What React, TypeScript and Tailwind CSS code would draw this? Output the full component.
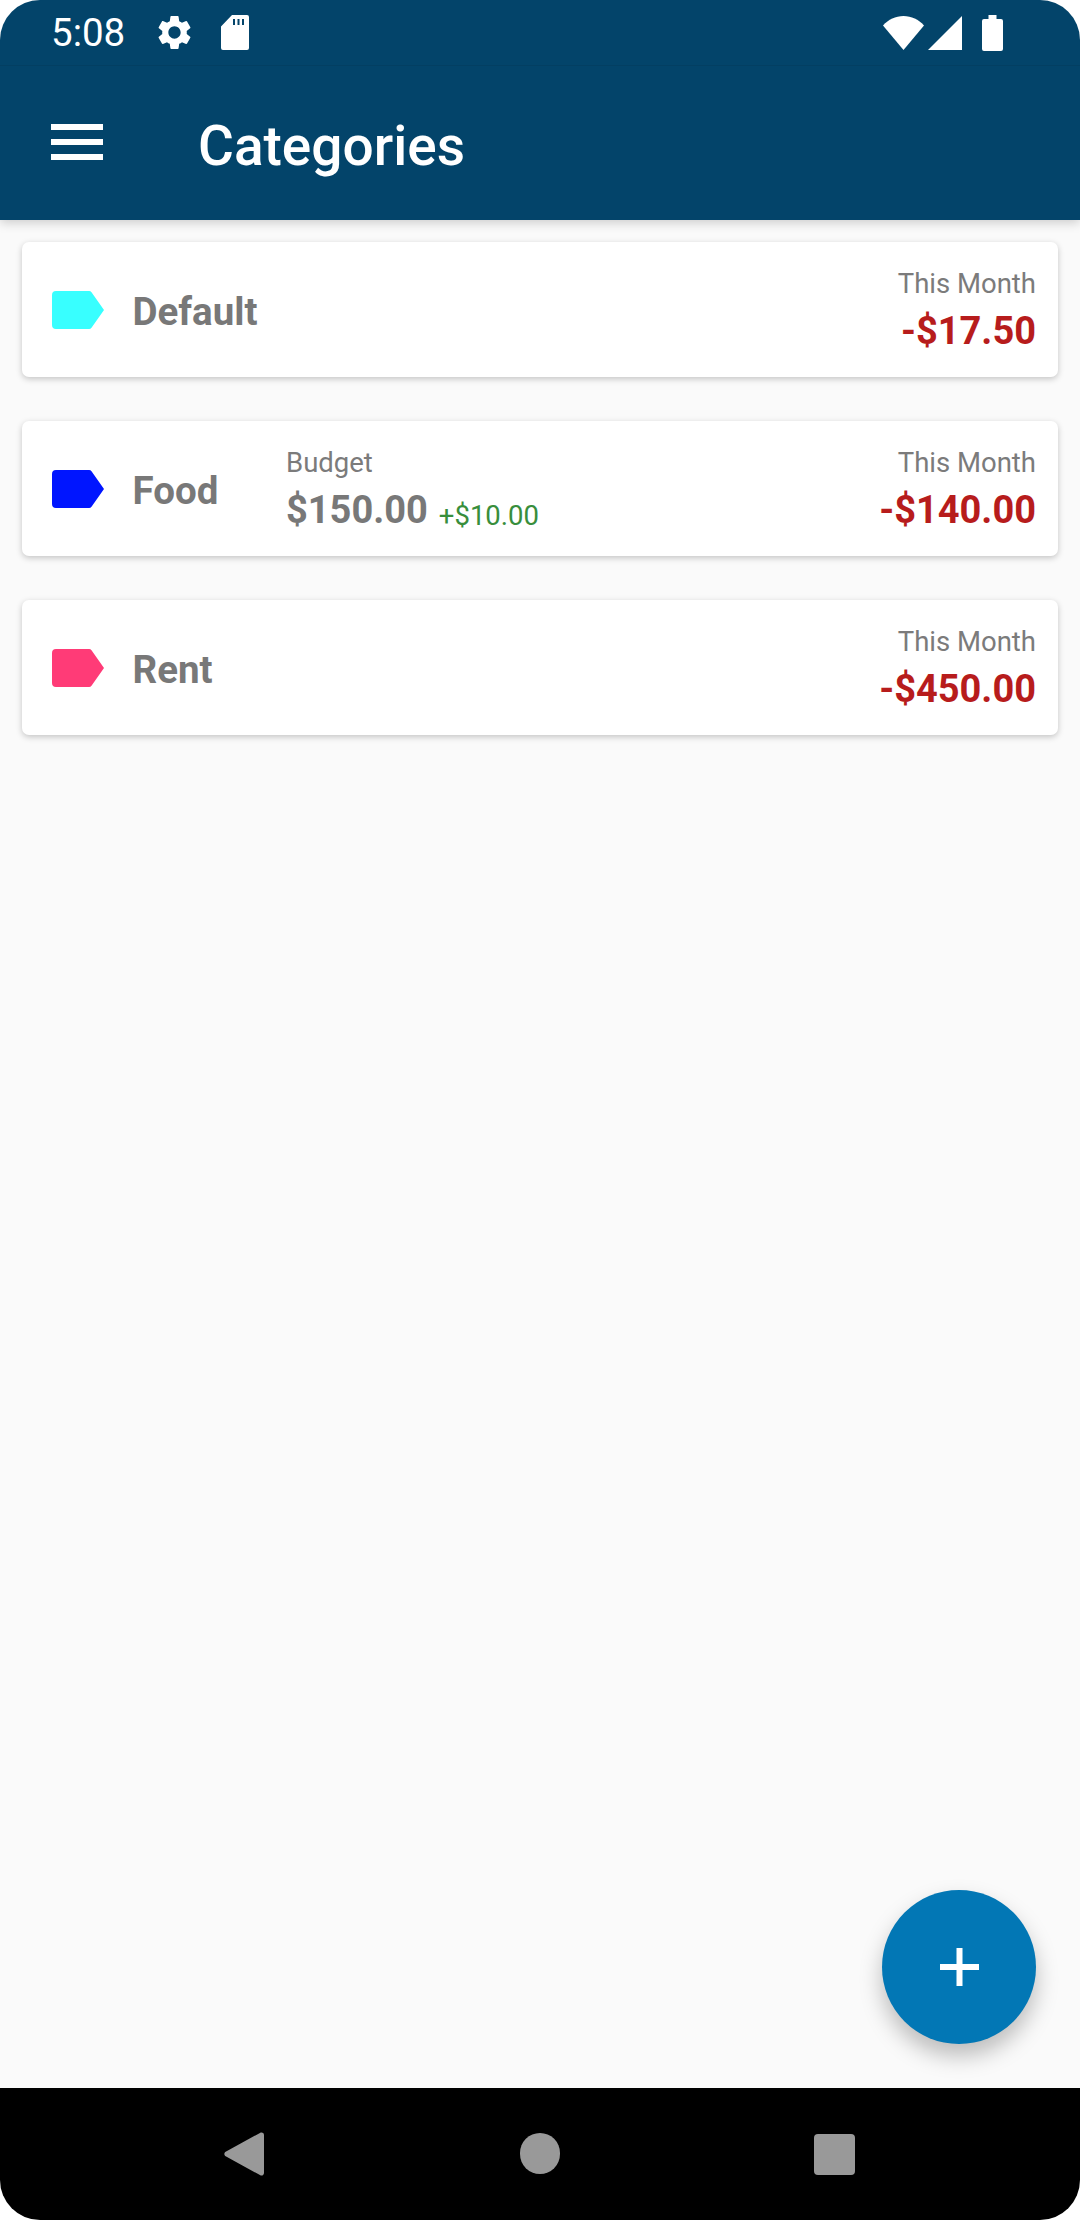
import { MdSettings } from "react-icons/md";

const categories = [
  { name: "Default", color: "#38ffff", spent: "-$17.50" },
  { name: "Food", color: "#0015ff", spent: "-$140.00", budget: "$150.00", left: "+$10.00" },
  { name: "Rent", color: "#ff3b77", spent: "-$450.00" },
];

function StatusBar() {
  return (
    <div className="flex h-[66px] shrink-0 items-center border-b border-[#033f62] pl-[51px] pr-[77px]">
      <span className="w-[103px] text-[38.5px] leading-[68px] text-white">5:08</span>
      <MdSettings size={41} color="#fff" />
      <svg width="28" height="35" viewBox="0 0 28 35" fill="#fff" className="ml-[26px]">
        <path
          fillRule="evenodd"
          d="M11 0h15a2 2 0 0 1 2 2v31a2 2 0 0 1-2 2H2a2 2 0 0 1-2-2V11.500zM12 4v6h2V4zm4.500 0v6h2V4zm4.500 0v6h2V4z"
        />
      </svg>
      <div className="ml-auto flex items-center">
        <svg width="41" height="34" viewBox="0 0 41 34" fill="#fff">
          <path d="M0 9.500C5.500 3.500 12.500 0 20.500 0S35.500 3.500 41 9.500L20.500 34z" />
        </svg>
        <svg width="34" height="34" viewBox="0 0 34 34" fill="#fff" className="ml-[4px]">
          <path d="M34 0v34H0z" />
        </svg>
        <svg width="21" height="36" viewBox="0 0 21 36" fill="#fff" className="ml-[20px]">
          <path d="M6.500 0h8v4H19a2 2 0 0 1 2 2v28a2 2 0 0 1-2 2H2a2 2 0 0 1-2-2V6a2 2 0 0 1 2-2h4.500z" />
        </svg>
      </div>
    </div>
  );
}

function AppBar() {
  return (
    <div className="flex h-[154px] shrink-0 items-center pb-[2px] pl-[51px]">
      <div className="flex w-[147px] flex-col gap-[9.500px]">
        <div className="h-[5.500px] w-[52px] bg-white" />
        <div className="h-[5.500px] w-[52px] bg-white" />
        <div className="h-[5.500px] w-[52px] bg-white" />
      </div>
      <h1 className="mt-[8px] text-[55px] font-medium leading-none text-white">Categories</h1>
    </div>
  );
}

function CategoryCard({ name, color, spent, budget, left }: (typeof categories)[number]) {
  return (
    <div className="flex h-[135px] items-center rounded-[7px] bg-white pl-[30px] pr-[22px] shadow-[0_2px_6px_rgba(0,0,0,0.22)]">
      <svg width="52" height="38" viewBox="0 0 52 38" style={{ fill: color }}>
        <path d="M4 0h33a3 3 0 0 1 2.500 1.300L52 19 39.500 36.700A3 3 0 0 1 37 38H4a4 4 0 0 1-4-4V4a4 4 0 0 1 4-4z" />
      </svg>
      <span className="ml-[28.500px] mt-[5px] w-[153.500px] text-[38.5px] font-bold leading-none text-[#787878]">{name}</span>
      {budget && (
        <div className="flex flex-col gap-[6px]">
          <span className="text-[27.5px] leading-[36px] text-[#7b7b7b]">Budget</span>
          <div className="flex items-baseline">
            <span className="text-[38px] font-bold leading-[46px] text-[#787878]">{budget}</span>
            <span className="ml-[11px] text-[27.5px] leading-none translate-y-[2px] text-[#388e3c]">{left}</span>
          </div>
        </div>
      )}
      <div className="ml-auto flex flex-col items-end gap-[6px]">
        <span className="text-[27.5px] leading-[36px] text-[#7b7b7b]">This Month</span>
        <span className="text-[38px] font-bold leading-[46px] text-[#b71c1c]">{spent}</span>
      </div>
    </div>
  );
}

function NavBar() {
  return (
    <div className="flex h-[132px] shrink-0 items-start bg-black pt-[44px]">
      <svg width="40" height="44" viewBox="0 0 40 44" fill="#999" className="ml-[224px]">
        <path d="M37 0.500a2.500 2.500 0 0 1 3 2.500v38a2.500 2.500 0 0 1-3 2.500a3 3 0 0 1-1.500-.7L1.200 24a3 3 0 0 1 0-4L35.500 1.200A3 3 0 0 1 37 .5z" />
      </svg>
      <div className="ml-[256px] mt-[1px] h-[41px] w-[40px] rounded-full bg-[#999]" />
      <div className="ml-[254px] mt-[2px] h-[41px] w-[41px] rounded-[4px] bg-[#999]" />
    </div>
  );
}

export default function App() {
  return (
    <div className="h-[2220px] w-[1080px] bg-white font-['Roboto',sans-serif]">
      <div className="flex h-full flex-col overflow-hidden rounded-[40px] bg-[#fafafa]">
        <div className="z-10 shrink-0 bg-[#03446a] shadow-[0_3px_10px_rgba(0,0,0,0.18)]">
          <StatusBar />
          <AppBar />
        </div>
        <main className="relative flex flex-1 flex-col gap-[44px] px-[22px] pt-[22px]">
          {categories.map((c) => (
            <CategoryCard key={c.name} {...c} />
          ))}
          <button className="absolute bottom-[44px] right-[44px] flex h-[154px] w-[154px] items-center justify-center rounded-full bg-[#0277b5] shadow-[0_12px_22px_rgba(0,0,0,0.25)]">
            <svg width="39" height="38" viewBox="0 0 39 38" fill="#fff">
              <path d="M16.500 0h6v16H39v6H22.500v16h-6V22H0v-6h16.500z" />
            </svg>
          </button>
        </main>
        <NavBar />
      </div>
    </div>
  );
}
